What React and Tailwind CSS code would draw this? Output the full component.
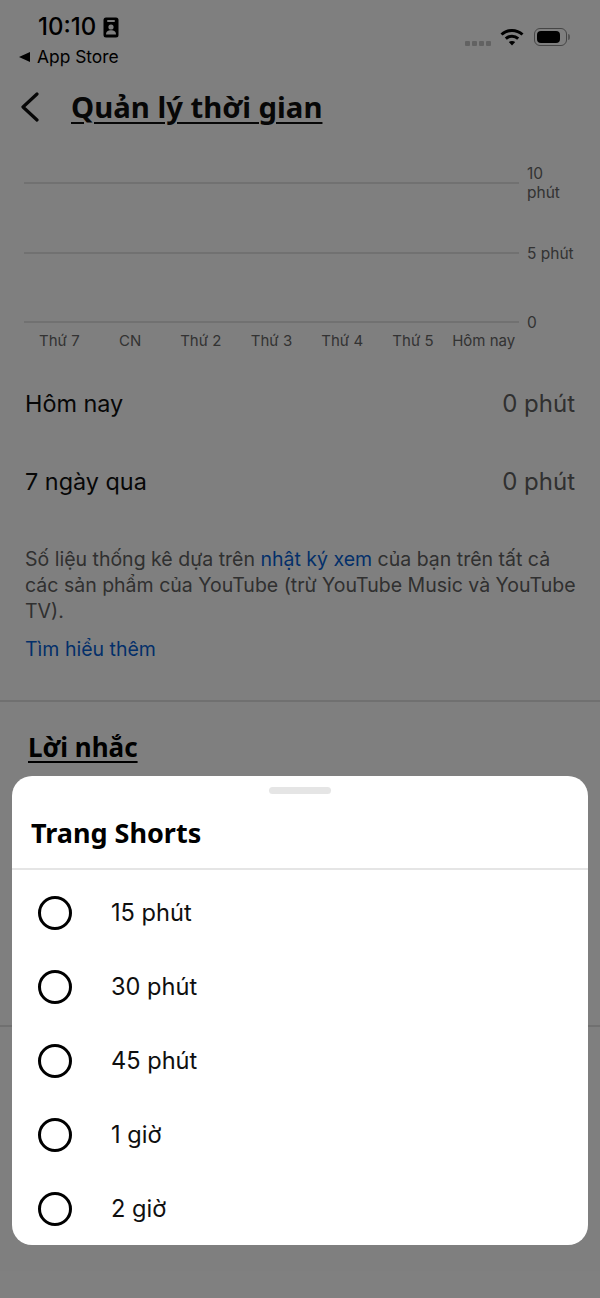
import React from "react";

const sans = "font-['Inter','Liberation_Sans',sans-serif]";
const display = "font-['Noto_Sans','Liberation_Sans',sans-serif]";

const days = ["Thứ 7", "CN", "Thứ 2", "Thứ 3", "Thứ 4", "Thứ 5", "Hôm nay"];
const options = ["15 phút", "30 phút", "45 phút", "1 giờ", "2 giờ"];

const GridLine = ({ label, labelClass = "" }) => (
  <div className="flex h-5 items-center">
    <div className="h-0.5 w-[495px] bg-[#e2e2e2]" />
    <span className={`ml-[8px] text-[15.5px] leading-[19px] text-[#666] ${labelClass}`}>
      {label}
    </span>
  </div>
);

const StatRow = ({ label }) => (
  <div className="flex h-[78px] items-center justify-between">
    <span className="text-[23.4px] text-[#0f0f0f]">{label}</span>
    <span className="text-[24px] text-[#606060]">0 phút</span>
  </div>
);

const FocusIcon = () => (
  <svg width="16" height="21" viewBox="0 0 16 21" className="ml-[7px]">
    <rect x="0.5" y="0.5" width="15" height="20" rx="2.5" fill="#000" />
    <rect x="4" y="3" width="8" height="2" rx="1" fill="#fff" />
    <circle cx="8" cy="10" r="2.6" fill="#fff" />
    <path d="M3 17.5c0-3 2.2-4.2 5-4.2s5 1.2 5 4.2z" fill="#fff" />
  </svg>
);

const WifiIcon = () => (
  <svg width="24" height="18" viewBox="0 0 24 18" fill="none" stroke="#000" strokeWidth="3">
    <path d="M1.5 6.5C7.5 1 16.5 1 22.5 6.5" />
    <path d="M5.8 10.6c3.6-3.3 8.8-3.3 12.4 0" />
    <path d="M12 17.5l-3.2-3.6c1.9-1.3 4.5-1.3 6.4 0z" fill="#000" stroke="none" />
  </svg>
);

const Battery = () => (
  <div className="ml-[10px] flex items-center">
    <div className="flex h-[18px] w-[33px] items-center rounded-[6px] border border-[#8a8a8a] p-0.5">
      <div className="h-full w-[23px] rounded-[4px] bg-black" />
    </div>
    <div className="ml-px h-[6px] w-[2px] rounded-r-sm bg-[#aaa]" />
  </div>
);

export default function App() {
  return (
    <div className={`relative h-[1298px] w-[600px] overflow-hidden bg-white ${sans}`}>
      {/* page behind the sheet */}
      <div className="flex h-[77px] items-start justify-between">
        <div className="pl-[19px] pt-[13px]">
          <div className="flex items-center pl-[19px]">
            <span className="text-[24px] font-medium leading-[28px] text-black">10:10</span>
            <FocusIcon />
          </div>
          <div className="mt-[4px] flex items-center">
            <span className="h-0 w-0 border-y-[5px] border-r-[11px] border-y-transparent border-r-black" />
            <span className="ml-[7px] text-[17.4px] leading-[24px] text-black">App Store</span>
          </div>
        </div>
        <div className="flex items-center pr-[30px] pt-[27px]">
          <div className="mr-[9px] flex gap-[2px] pt-[14px]">
            {[0, 1, 2, 3].map((i) => (
              <span key={i} className="h-[5px] w-[5px] rounded-[1px] bg-[#c4c4c4]" />
            ))}
          </div>
          <WifiIcon />
          <Battery />
        </div>
      </div>

      <div className="flex h-[60px] items-center pl-[20px]">
        <svg width="20" height="30" viewBox="0 0 20 30" fill="none" stroke="#0f0f0f" strokeWidth="3.2" strokeLinecap="round" strokeLinejoin="round">
          <path d="M17 2 3 15l14 13" />
        </svg>
        <h1 className={`ml-[31px] text-[29.3px] font-bold leading-[36px] text-[#0f0f0f] underline decoration-2 underline-offset-[4px] ${display}`}>
          Quản lý thời gian
        </h1>
      </div>

      <div className="pl-6 pt-[36px]">
        <GridLine label="10 phút" labelClass="w-[44px]" />
        <div className="mt-[50px]">
          <GridLine label="5 phút" />
        </div>
        <div className="mt-[49px]">
          <GridLine label="0" />
        </div>
        <div className="mt-px grid w-[495px] grid-cols-7 text-center text-[15px] leading-4 text-[#666]">
          {days.map((d) => (
            <span key={d} className="whitespace-nowrap">{d}</span>
          ))}
        </div>
      </div>

      <div className="px-[25px] pt-[16px]">
        <StatRow label="Hôm nay" />
        <StatRow label="7 ngày qua" />
        <p className="mt-[25px] w-[556px] text-[19.5px] leading-[26px] text-[#606060]">
          Số liệu thống kê dựa trên <span className="text-[#065fd4]">nhật ký xem</span> của bạn trên tất cả các sản phẩm của YouTube (trừ YouTube Music và YouTube TV).
        </p>
        <p className="mt-[12px] text-[19.5px] leading-[26px] text-[#065fd4]">Tìm hiểu thêm</p>
      </div>

      <div className="mt-[38px] h-0.5 bg-[#e0e0e0]" />

      <h2 className={`pl-[28px] pt-[27px] text-[26px] font-bold leading-[36px] text-black underline decoration-2 underline-offset-[4px] ${display}`}>
        Lời nhắc
      </h2>

      <div className="mt-[260px] h-0.5 bg-[#e0e0e0]" />

      {/* dim layer and bottom sheet */}
      <div className="absolute inset-0 bg-black/50" />
      <div className="absolute left-3 top-[776px] h-[469px] w-[576px] rounded-[20px] bg-white">
        <div className="flex justify-center pt-[11px]">
          <div className="h-[7px] w-[62px] rounded-full bg-[#e5e5e5]" />
        </div>
        <div className="flex h-[76px] items-center border-b-2 border-[#e5e5e5] pl-[19px] pt-[3px]">
          <span className={`text-[27px] font-bold leading-[34px] text-black ${display}`}>Trang Shorts</span>
        </div>
        <div className="pt-[6px]">
          {options.map((o) => (
            <div key={o} className="flex h-[74px] items-center pl-[26px]">
              <span className="h-[34px] w-[34px] rounded-full border-[3px] border-black" />
              <span className="ml-[39px] text-[23.6px] text-[#0f0f0f]">{o}</span>
            </div>
          ))}
        </div>
      </div>
    </div>
  );
}
